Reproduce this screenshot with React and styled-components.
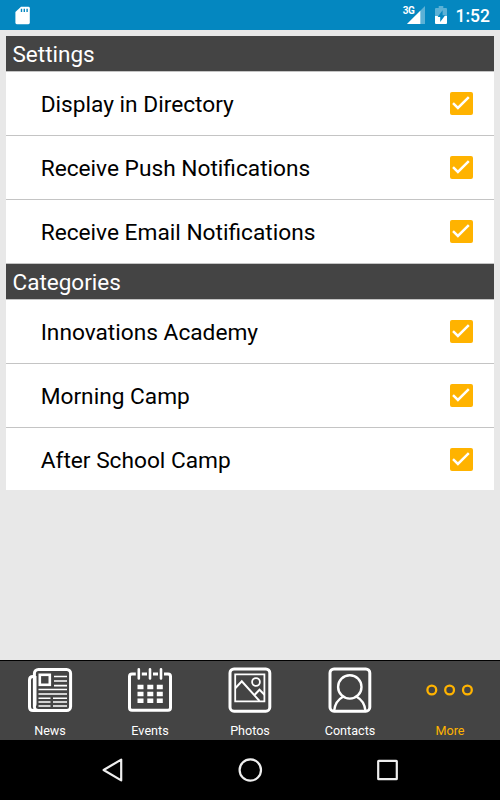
import React, { useState } from 'react';
import styled, { createGlobalStyle } from 'styled-components';

const SETTINGS = ['Display in Directory', 'Receive Push Notifications', 'Receive Email Notifications'];
const CATEGORIES = ['Innovations Academy', 'Morning Camp', 'After School Camp'];

const StatusBar = () => (
	<StatusContainer>
		<svg width="16" height="19" viewBox="0 0 16 19">
			<path d="M6 0.8h7.4a1.4 1.4 0 0 1 1.4 1.4v14.6a1.4 1.4 0 0 1-1.4 1.4H1.8a1.4 1.4 0 0 1-1.4-1.4V6z" fill="#fff" />
			<path d="M6.5 2.8v3.2M9.3 2.8v3.2M12.1 2.8v3.2" stroke="#0487c0" strokeWidth="1.4" />
		</svg>
		<StatusRight>
			<Network>3G</Network>
			<SignalIcon width="18" height="18" viewBox="0 0 18 18">
				<path d="M0 18L18 0v18z" fill="#fff" fillOpacity="0.35" />
				<path d="M0 18L13.3 4.7V18z" fill="#fff" />
			</SignalIcon>
			<BatteryIcon width="12" height="18" viewBox="0 0 12 18">
				<path d="M0 3q0-1 1-1h2.7V0h4.6v2H11q1 0 1 1v7H0z" fill="#fff" fillOpacity="0.35" />
				<path d="M0 10h12v7q0 1-1 1H1q-1 0-1-1z" fill="#fff" />
				<path d="M7.6 4.2L2.6 11h2.6v5l5-6.8H7.6z" fill="#0487c0" />
			</BatteryIcon>
			<Clock>1:52</Clock>
		</StatusRight>
	</StatusContainer>
);

const OptionGroup = ({ title, options, checked, onToggle }) => (
	<section>
		<GroupTitle>{title}</GroupTitle>
		{options.map(option => (
			<Option key={option} onClick={() => onToggle(option)}>
				<OptionLabel>{option}</OptionLabel>
				<Checkbox role="checkbox" aria-checked={checked[option]} $checked={checked[option]}>
					{checked[option] && (
						<svg width="22" height="22" viewBox="0 0 22 22">
							<path d="M3 11.2l4.9 4.7L18.8 5.2" fill="none" stroke="#fff" strokeWidth="2.5" />
						</svg>
					)}
				</Checkbox>
			</Option>
		))}
	</section>
);

const NewsIcon = () => (
	<TabSvg viewBox="0 0 50 50">
		<rect x="9.4" y="4.4" width="36.2" height="41.2" rx="4" strokeWidth="3" />
		<path d="M9.5 11.5H8q-3.5 0-3.5 3.5v27q0 3.6 3.5 3.6h6M10 11v28q0 1.5-0.6 1.5" strokeWidth="3" />
		<rect x="14.8" y="9.8" width="10" height="10" strokeWidth="2.6" />
		<path d="M29 11.5h13M29 16h13M29 20.6h13M13.5 24.5h28.5M13.5 29h28.5M13.5 33.2h12M28 33.2h14M13.5 37h12M28 37h14M13.5 41h12M28 41h14" strokeWidth="1.6" />
	</TabSvg>
);

const EventsIcon = () => (
	<TabSvg viewBox="0 0 50 50">
		<rect x="4.5" y="9" width="41" height="36.3" rx="2.5" strokeWidth="3" />
		<path d="M13.8 5.5v9M25 5.5v9M36 5.5v9" stroke="#444" strokeWidth="6" />
		<path d="M13.8 4.3v9.2M25 4.3v9.2M36 4.3v9.2" strokeWidth="2.6" strokeLinecap="round" />
		<path d="M12.5 22h6M22.3 22h6M31.8 22h6M12.5 29h6M22.3 29h6M31.8 29h6M12.5 35.8h6M22.3 35.8h6M31.8 35.8h6" strokeWidth="4.6" />
	</TabSvg>
);

const PhotosIcon = () => (
	<TabSvg viewBox="0 0 50 50">
		<rect x="5" y="4" width="39.8" height="42.2" rx="4" strokeWidth="3" />
		<path d="M10.2 9.3h29.2v27H10.2z" strokeWidth="1.8" />
		<path d="M10.5 23l6.3-6.7L34.5 36M29 30.5l5.5-5.8 5 5" strokeWidth="2" />
		<circle cx="31" cy="17" r="3.9" strokeWidth="1.8" />
	</TabSvg>
);

const ContactsIcon = () => (
	<TabSvg viewBox="0 0 50 50">
		<rect x="5" y="4" width="39.8" height="42.2" rx="4" strokeWidth="3" />
		<circle cx="24.8" cy="21.9" r="11.7" strokeWidth="2.4" />
		<path d="M9.2 45.5c0.6-6 4-11.2 8.8-13.8M40.4 45.5c-0.6-6-4-11.2-8.8-13.8" strokeWidth="2.4" />
	</TabSvg>
);

const MoreIcon = () => (
	<TabSvg viewBox="0 0 50 50">
		<circle cx="6.8" cy="25" r="4.4" strokeWidth="2.3" />
		<circle cx="24.6" cy="25" r="4.4" strokeWidth="2.3" />
		<circle cx="42.4" cy="25" r="4.4" strokeWidth="2.3" />
	</TabSvg>
);

const TABS = [
	{ name: 'News', Icon: NewsIcon },
	{ name: 'Events', Icon: EventsIcon },
	{ name: 'Photos', Icon: PhotosIcon },
	{ name: 'Contacts', Icon: ContactsIcon },
	{ name: 'More', Icon: MoreIcon },
];

const App = () => {
	const [tab, setTab] = useState('More');
	const [checked, setChecked] = useState(
		Object.fromEntries([...SETTINGS, ...CATEGORIES].map(name => [name, true]))
	);
	const toggle = name => setChecked({ ...checked, [name]: !checked[name] });

	return (
		<Screen>
			<GlobalStyle />
			<StatusBar />
			<Content>
				<Panel>
					<OptionGroup title="Settings" options={SETTINGS} checked={checked} onToggle={toggle} />
					<OptionGroup title="Categories" options={CATEGORIES} checked={checked} onToggle={toggle} />
				</Panel>
			</Content>
			<TabBar>
				{TABS.map(({ name, Icon }) => (
					<Tab key={name} $active={tab === name} onClick={() => setTab(name)}>
						<Icon />
						{name}
					</Tab>
				))}
			</TabBar>
			<SystemNav>
				<NavSvg viewBox="0 0 26 26">
					<path d="M3.6 13L21.2 2.6v20.8z" />
				</NavSvg>
				<NavSvg viewBox="0 0 26 26">
					<circle cx="12.3" cy="13" r="10.7" />
				</NavSvg>
				<NavSvg viewBox="0 0 26 26">
					<rect x="3.2" y="3.8" width="18.6" height="18.4" rx="0.5" />
				</NavSvg>
			</SystemNav>
		</Screen>
	);
};

// styled
const GlobalStyle = createGlobalStyle`
	* {
		box-sizing: border-box;
	}

	body {
		margin: 0;
		font-family: Roboto, sans-serif;
	}
`;

const Screen = styled.div`
	width: 100%;
	height: 100vh;
	display: flex;
	flex-direction: column;
	background: #e8e8e8;
`;

const StatusContainer = styled.header`
	height: 30px;
	padding: 0 10px 0 15px;
	display: flex;
	align-items: center;
	justify-content: space-between;
	background: #0487c0;
	color: #fff;
`;

const StatusRight = styled.div`
	height: 30px;
	display: flex;
	align-items: center;
`;

const Network = styled.span`
	align-self: flex-start;
	margin-top: 6px;
	font-size: 10px;
	line-height: 10px;
	font-weight: 700;
	letter-spacing: -0.4px;
`;

const SignalIcon = styled.svg`
	margin-left: -8px;
`;

const BatteryIcon = styled.svg`
	margin-left: 10px;
`;

const Clock = styled.span`
	margin-left: 9px;
	padding-top: 2px;
	font-size: 17.5px;
	font-weight: 500;
`;

const Content = styled.main`
	flex: 1;
	padding: 6px;
`;

const Panel = styled.div`
	background: #fff;
`;

const GroupTitle = styled.h2`
	height: 36px;
	margin: 0;
	padding: 0 6.5px;
	border-bottom: 1px solid #c4c4c4;
	background: #444;
	background-clip: padding-box;
	color: #fff;
	font-size: 22.5px;
	font-weight: 400;
	line-height: 37px;
`;

const Option = styled.div`
	height: 64px;
	padding: 0 21px 0 34.7px;
	display: flex;
	align-items: center;
	justify-content: space-between;
	border-bottom: 1px solid #c4c4c4;
	cursor: pointer;

	section:last-child &:last-child {
		height: 62px;
		border-bottom: 0;
	}
`;

const OptionLabel = styled.span`
	height: 27px;
	color: #000;
	font-size: 22.7px;
	line-height: 30px;
`;

const Checkbox = styled.span`
	width: 23px;
	height: 23px;
	border-radius: 2px;
	border: ${({ $checked }) => ($checked ? '0' : '2px solid #757575')};
	background: ${({ $checked }) => ($checked ? '#ffb300' : 'transparent')};
`;

const TabBar = styled.nav`
	height: 80px;
	display: grid;
	grid-template-columns: repeat(5, 1fr);
	border-top: 1px solid #000;
	background: #444;
`;

const Tab = styled.button`
	padding: 3.6px 0 0;
	display: flex;
	flex-direction: column;
	align-items: center;
	gap: 8.4px;
	border: 0;
	background: none;
	color: ${({ $active }) => ($active ? '#ffb300' : '#fff')};
	font-family: inherit;
	font-size: 12.6px;
	line-height: 15px;
	cursor: pointer;
`;

const TabSvg = styled.svg`
	width: 50px;
	height: 50px;
	fill: none;
	stroke: currentColor;
`;

const SystemNav = styled.footer`
	height: 60px;
	padding: 0 99px 0 100px;
	display: flex;
	align-items: center;
	justify-content: space-between;
	background: #000;
`;

const NavSvg = styled.svg`
	width: 26px;
	height: 26px;
	fill: none;
	stroke: #eee;
	stroke-width: 2.2;
	stroke-linejoin: round;
`;

export default App;
